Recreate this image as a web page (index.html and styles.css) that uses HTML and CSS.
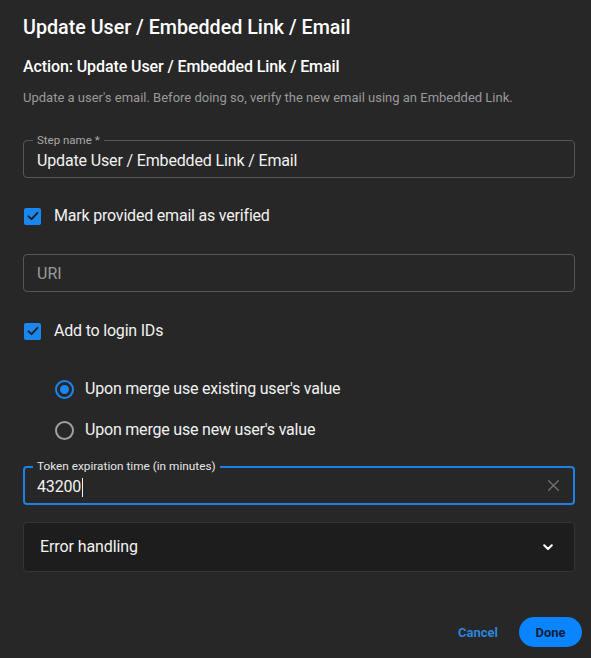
FILE: index.html
```html
<!DOCTYPE html>
<html>
<head>
<meta charset="utf-8">
<link rel="stylesheet" href="styles.css">
</head>
<body>
<div class="dialog">
  <h1 class="title">Update User / Embedded Link / Email</h1>
  <h2 class="subtitle">Action: Update User / Embedded Link / Email</h2>
  <p class="desc">Update a user's email. Before doing so, verify the new email using an Embedded Link.</p>

  <div class="field field-step">
    <span class="field-label">Step name *</span>
    <span class="field-value">Update User / Embedded Link / Email</span>
  </div>

  <div class="check-row check-first">
    <span class="checkbox"><svg viewBox="0 0 16 16" width="16" height="16"><path d="M3.5 8.3 L6.6 11.2 L12.5 4.8" fill="none" stroke="#1b1b1b" stroke-width="1.8" stroke-linecap="round" stroke-linejoin="round"/></svg></span>
    <span class="check-label">Mark provided email as verified</span>
  </div>

  <div class="field field-uri">
    <span class="field-placeholder">URI</span>
  </div>

  <div class="check-row check-second">
    <span class="checkbox"><svg viewBox="0 0 16 16" width="16" height="16"><path d="M3.5 8.3 L6.6 11.2 L12.5 4.8" fill="none" stroke="#1b1b1b" stroke-width="1.8" stroke-linecap="round" stroke-linejoin="round"/></svg></span>
    <span class="check-label">Add to login IDs</span>
  </div>

  <div class="radios">
    <div class="radio-row">
      <span class="radio radio-on"><span class="radio-dot"></span></span>
      <span class="radio-label">Upon merge use existing user's value</span>
    </div>
    <div class="radio-row">
      <span class="radio"></span>
      <span class="radio-label">Upon merge use new user's value</span>
    </div>
  </div>

  <div class="field field-token">
    <span class="field-label field-label-focus">Token expiration time (in minutes)</span>
    <span class="field-value">43200<span class="caret"></span></span>
    <svg class="clear-icon" viewBox="0 0 11 11" width="11" height="11"><path d="M0.7 0.7 L10.3 10.3 M10.3 0.7 L0.7 10.3" stroke="#707070" stroke-width="1.4" stroke-linecap="round"/></svg>
  </div>

  <div class="accordion">
    <span class="accordion-label">Error handling</span>
    <svg class="chevron" viewBox="0 0 10 7" width="10" height="7"><path d="M1.2 1.2 L5 5 L8.8 1.2" fill="none" stroke="#ffffff" stroke-width="2" stroke-linecap="round" stroke-linejoin="round"/></svg>
  </div>

  <div class="actions">
    <button class="btn-cancel">Cancel</button>
    <button class="btn-done">Done</button>
  </div>
</div>
</body>
</html>
```

FILE: styles.css
```css
html, body {
  margin: 0;
  padding: 0;
  background: #272727;
}
body {
  font-family: Roboto, "Liberation Sans", sans-serif;
  color: #f2f2f2;
  width: 591px;
  height: 658px;
  overflow: hidden;
}
.dialog {
  padding: 0 16px 0 23px;
  display: flex;
  flex-direction: column;
}
.title {
  margin: 16px 0 0;
  font-size: 19.7px;
  line-height: 24px;
  font-weight: 500;
  color: #ffffff;
}
.subtitle {
  margin: 17px 0 0;
  font-size: 16px;
  line-height: 20px;
  font-weight: 500;
  letter-spacing: -0.1px;
  color: #ffffff;
}
.desc {
  margin: 12px 0 0;
  font-size: 13px;
  line-height: 18px;
  color: #9a9a9a;
}
.field {
  position: relative;
  height: 38px;
  border: 1px solid #565656;
  border-radius: 4px;
  box-sizing: border-box;
  display: flex;
  align-items: center;
  padding: 0 13px;
}
.field-step { margin-top: 33px; }
.field-uri { margin-top: 26px; }
.field-token {
  margin-top: 24px;
  height: 39px;
  border: 2px solid #1e7fe6;
  padding: 0 12px;
}
.field-label {
  position: absolute;
  top: -8px;
  left: 9px;
  padding: 0 4px;
  background: #272727;
  font-size: 11.5px;
  line-height: 14px;
  color: #a8a8a8;
}
.field-label-focus {
  left: 8px;
  top: -9px;
  font-size: 11.8px;
  color: #e6e6e6;
}
.field-value {
  font-size: 16px;
  line-height: 20px;
  letter-spacing: -0.15px;
  color: #f2f2f2;
  display: flex;
  align-items: center;
  padding-top: 3px;
}
.field-placeholder {
  font-size: 16px;
  line-height: 20px;
  color: #9a9a9a;
  padding-top: 1px;
}
.caret {
  display: inline-block;
  width: 1px;
  height: 19px;
  background: #f2f2f2;
  margin-left: 1px;
}
.clear-icon {
  margin-left: auto;
  margin-right: 2px;
}
.check-row {
  display: flex;
  align-items: center;
  height: 24px;
  gap: 13px;
}
.check-first { margin-top: 26px; }
.check-second { margin-top: 27px; }
.checkbox {
  width: 17px;
  height: 17px;
  border-radius: 2px;
  background: #1a86f0;
  display: flex;
  align-items: center;
  justify-content: center;
  margin-left: 1px;
}
.check-label {
  font-size: 16px;
  line-height: 20px;
  letter-spacing: -0.2px;
  color: #f2f2f2;
}
.radios {
  margin-top: 34px;
  padding-left: 32px;
  display: flex;
  flex-direction: column;
  gap: 17px;
}
.radio-row {
  display: flex;
  align-items: center;
  height: 24px;
  gap: 11px;
}
.radio {
  width: 19px;
  height: 19px;
  box-sizing: border-box;
  border: 2px solid #a0a0a0;
  border-radius: 50%;
  display: flex;
  align-items: center;
  justify-content: center;
}
.radio-on { border-color: #1a86f0; }
.radio-dot {
  width: 9px;
  height: 9px;
  border-radius: 50%;
  background: #1a86f0;
}
.radio-label {
  font-size: 16px;
  line-height: 20px;
  letter-spacing: -0.2px;
  color: #f2f2f2;
}
.accordion {
  margin-top: 17px;
  height: 50px;
  box-sizing: border-box;
  border: 1px solid #353535;
  border-radius: 4px;
  background: #1d1d1d;
  display: flex;
  align-items: center;
  padding: 0 21px 0 16px;
}
.accordion-label {
  font-size: 16px;
  line-height: 20px;
  letter-spacing: -0.1px;
  color: #f2f2f2;
}
.chevron { margin-left: auto; }
.actions {
  display: flex;
  justify-content: flex-end;
  align-items: center;
  gap: 21px;
  margin-top: 45px;
  margin-right: -7px;
}
.btn-cancel {
  background: none;
  border: none;
  padding: 0;
  font-family: inherit;
  font-size: 13px;
  font-weight: 700;
  color: #2a85dd;
}
.btn-done {
  width: 63px;
  height: 30px;
  border: none;
  border-radius: 15px;
  background: #0a84ff;
  font-family: inherit;
  font-size: 13px;
  font-weight: 700;
  color: #0f1e38;
}
```
